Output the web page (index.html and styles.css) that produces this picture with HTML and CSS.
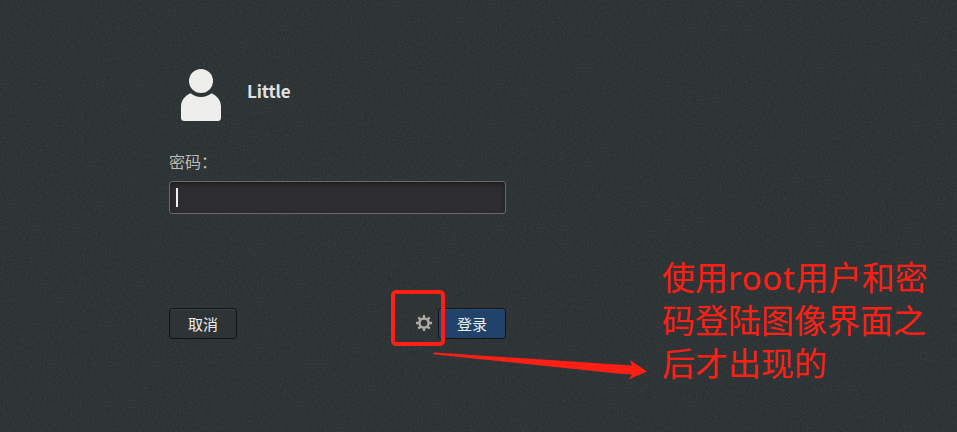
FILE: index.html
```
<!DOCTYPE html>
<html lang="zh-CN">
<head>
<meta charset="utf-8">
<title>登录</title>
<link rel="stylesheet" href="styles.css">
</head>
<body>
<svg class="grain" aria-hidden="true">
  <filter id="noise" x="0" y="0" width="100%" height="100%" color-interpolation-filters="sRGB">
    <feTurbulence type="fractalNoise" baseFrequency="0.55" numOctaves="2" seed="4"/>
    <feColorMatrix values="0 0 0 0 0.6  0 0 0 0 0.65  0 0 0 0 0.65  0.2 0 0 0 -0.085"/>
  </filter>
  <rect width="100%" height="100%" filter="url(#noise)"/>
</svg>
<main class="dialog">
  <header class="user">
    <svg class="avatar" width="40" height="52" viewBox="0 0 40 52">
      <circle cx="20" cy="12" r="12"/>
      <path d="M9.5 24.3C4 26.8 0 31.5 0 37.5V48.500a3.500 3.500 0 0 0 3.500 3.500h33a3.500 3.500 0 0 0 3.500-3.500V37.500C40 31.500 36 26.800 30.500 24.300Q26 28 20 28T9.500 24.300z"/>
    </svg>
    <h1 class="name">Little</h1>
  </header>
  <label class="label" for="password">密码：</label>
  <div class="entry" id="password"><span class="caret"></span></div>
  <footer class="actions">
    <button class="button cancel">取消</button>
    <svg class="gear" width="16" height="16" viewBox="0 0 16 16">
      <circle class="ring" cx="8" cy="8" r="4.600"/>
      <path class="teeth" d="M8 0V3M8 13V16M0 8H3M13 8H16M2.340 2.340L4.600 4.600M11.400 11.400L13.660 13.660M2.340 13.660L4.600 11.400M11.400 4.600L13.660 2.340"/>
    </svg>
    <button class="button login">登录</button>
  </footer>
</main>
<div class="marker"></div>
<svg class="arrow" width="216" height="32" viewBox="0 0 216 32">
  <path d="M0 1.500Q0 .5 2 .5L199 13.500L197 8L214 19.500L195.500 27.500L199 22.500L184 21.500L2 2.500z"/>
</svg>
<p class="note">使用<span class="latin">root</span>用户和密<br>码登陆图像界面之<br>后才出现的</p>
</body>
</html>
```
FILE: styles.css
```
body {
  margin: 0;
  height: 432px;
  position: relative;
  overflow: hidden;
  background: #2d3335;
  font-family: "Noto Sans", "Noto Sans CJK SC", sans-serif;
}
.grain {
  position: absolute;
  inset: 0;
  width: 100%;
  height: 100%;
}
.dialog {
  position: relative;
  width: 337px;
  margin-left: 169px;
  padding-top: 69px;
}
.user {
  display: flex;
  gap: 26px;
  height: 52px;
  padding-left: 12px;
}
.avatar {
  fill: #eeeeec;
}
.name {
  margin: 10px 0 0;
  color: #e2e2e0;
  font-family: "Noto Sans CJK SC", sans-serif;
  font-size: 17px;
  line-height: 24px;
  font-weight: 700;
  letter-spacing: -.1px;
}
.label {
  display: block;
  margin-top: 28px;
  height: 32px;
  color: #babdb6;
  font-family: "Noto Sans CJK SC", sans-serif;
  font-size: 16px;
  line-height: 24px;
}
.entry {
  box-sizing: border-box;
  height: 33px;
  padding: 6px;
  border: 1px solid #6b6a65;
  border-radius: 3px;
  background: #2d2d2f;
  box-shadow: inset 0 2px 4px rgba(0, 0, 0, .4);
}
.caret {
  display: block;
  width: 2px;
  height: 19px;
  background: #eeeeec;
}
.actions {
  display: flex;
  align-items: center;
  margin-top: 94px;
}
.button {
  box-sizing: border-box;
  width: 68px;
  height: 31px;
  padding: 0;
  border: 1px solid #121415;
  border-radius: 3px;
  background: #2e3436;
  box-shadow: inset 0 1px #3b4143;
  color: #eeeeec;
  font-family: "Noto Sans CJK SC", sans-serif;
  font-size: 15px;
  line-height: 29px;
}
.login {
  background: #21436b;
  box-shadow: inset 0 1px #2d4d73;
}
.gear {
  margin: 0 6px 2px auto;
  fill: none;
  stroke: #aeaca0;
}
.ring {
  stroke-width: 2.500;
}
.teeth {
  stroke-width: 2.3;
}
.marker {
  position: absolute;
  left: 391px;
  top: 290px;
  box-sizing: border-box;
  width: 54px;
  height: 56px;
  border: 4px solid #ff1f14;
  border-radius: 5px;
}
.arrow {
  position: absolute;
  left: 433px;
  top: 352px;
  fill: #ff1f14;
}
.note {
  position: absolute;
  left: 662px;
  top: 256px;
  margin: 0;
  color: #ff1f14;
  font-size: 33px;
  line-height: 43px;
  white-space: nowrap;
}
.latin {
  letter-spacing: .7px;
}
```
